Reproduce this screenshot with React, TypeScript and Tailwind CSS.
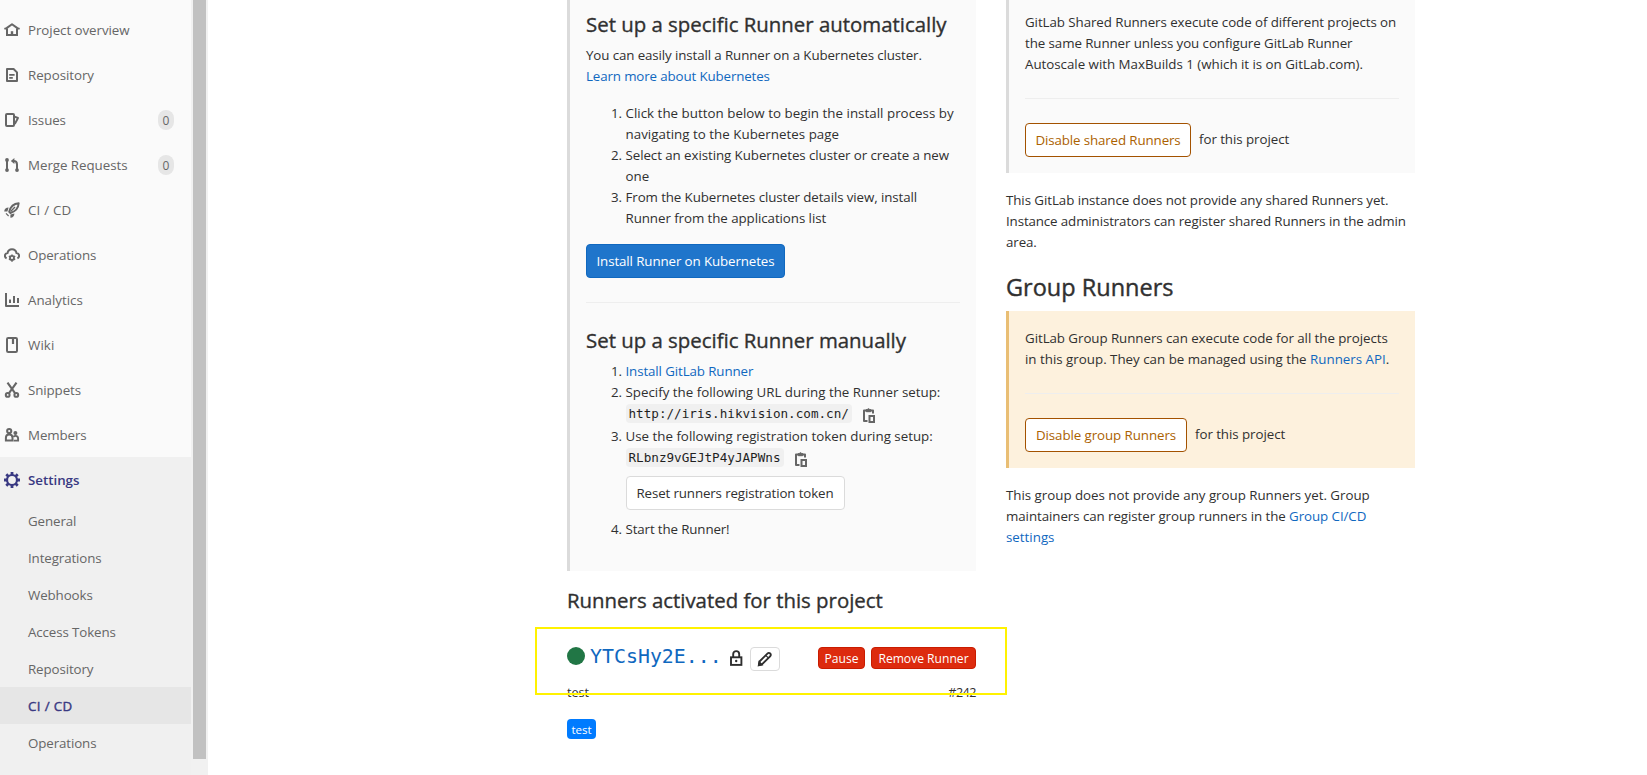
import type { ReactNode } from "react";

type IconProps = { children: ReactNode; className?: string };

function Icon({ children, className = "" }: IconProps) {
  return (
    <svg
      viewBox="0 0 16 16"
      fill="none"
      stroke="currentColor"
      strokeWidth="1.9"
      className={`h-4 w-4 shrink-0 ${className}`}
    >
      {children}
    </svg>
  );
}

const icons = {
  home: (
    <Icon>
      <path d="M.4 6.9 2.6 6.1 8 2.2l5.4 3.9 2.2.8" strokeLinejoin="round" strokeWidth="2" />
      <path d="M3 6.5v6.6h10V6.5" strokeWidth="2" />
      <path d="M8 9.2v4" strokeWidth="2.4" />
    </Icon>
  ),
  doc: (
    <Icon>
      <path d="M3 2h6.6L13 5.4V14H3z" strokeLinejoin="round" strokeWidth="2" />
      <path d="M5.2 7.8h5.4M5.2 10.8h3.6" strokeWidth="1.7" />
    </Icon>
  ),
  issues: (
    <Icon>
      <rect x="2" y="2" width="8" height="12" rx="1" strokeWidth="2" />
      <path d="M10.5 4.6 14 6l-3.2 6" strokeLinejoin="round" />
    </Icon>
  ),
  merge: (
    <Icon>
      <path d="M3 3v10" strokeWidth="2" />
      <path d="M13 13V7.4C13 5.2 11.8 4 9.5 4H8.4" strokeWidth="2" />
      <path d="M10.4 .9v6.2L6.8 4z" fill="currentColor" stroke="none" />
      <g fill="currentColor" stroke="none">
        <circle cx="3" cy="2.9" r="1.9" />
        <circle cx="3" cy="13.1" r="1.9" />
        <circle cx="13" cy="13.1" r="1.9" />
      </g>
    </Icon>
  ),
  rocket: (
    <Icon>
      <path d="M5.2 9.8C6.4 5 9.6 1.6 14.7 1.3 14.4 6.4 11 9.6 6.4 11z" strokeLinejoin="round" />
      <path d="M6.6 9.4 11 5" strokeWidth="1.4" />
      <path
        d="M.2 9.4C.4 7 2 5.4 4.6 5.4L3.4 9.4zM6.4 15.8c2.6-.2 4-1.8 4-4.4l-4 1.2z"
        fill="currentColor"
        stroke="none"
      />
      <path d="m2 11.400 2.600 2.600" strokeWidth="1.2" />
    </Icon>
  ),
  cloudGear: (
    <Icon>
      <path
        d="M2.6 11.4C1.5 10.9.9 10 .9 8.8.9 7.2 2 6.2 3.5 6 4 3.6 5.700 2.200 8 2.200s4 1.400 4.500 3.800c1.500.2 2.600 1.200 2.600 2.800 0 1.200-.6 2.100-1.700 2.600"
        strokeWidth="2"
      />
      <circle cx="8" cy="10.9" r="2" />
      <path
        d="M8 7.400v1.400M8 13v1.800M4.900 9.100l1.300.8M9.800 11.900l1.400.8M4.900 12.700l1.300-.8M9.800 9.900l1.400-.8"
        strokeWidth="1.5"
      />
    </Icon>
  ),
  chart: (
    <Icon>
      <path d="M2 1v13h13" strokeWidth="2" strokeLinejoin="round" />
      <path d="M6 7.5V11M10 4v7M14 6v5" strokeWidth="2" />
    </Icon>
  ),
  book: (
    <Icon>
      <rect x="3" y="1" width="10" height="14" rx="1.2" strokeWidth="2" />
      <path d="M9 1v6" strokeWidth="2.2" />
    </Icon>
  ),
  scissors: (
    <Icon>
      <circle cx="3.7" cy="12.9" r="1.9" strokeWidth="2" />
      <circle cx="12.3" cy="12.9" r="1.9" strokeWidth="2" />
      <path d="M3.5 .7 11 11.2M12.5 .7 5 11.2" strokeWidth="2.1" />
    </Icon>
  ),
  people: (
    <Icon>
      <circle cx="5.2" cy="4" r="2.1" strokeWidth="2" />
      <path d="M1.900 13.600v-2.800C1.900 8.600 3.300 7.500 5.200 7.500s3.300 1.100 3.300 3.300v2.800z" strokeWidth="2" />
      <circle cx="11.4" cy="6" r="2" fill="currentColor" stroke="none" />
      <path d="M9.700 13.600h4.400v-2c0-1.700-1-2.700-2.600-2.700-1 0-1.600.3-2.200.9" />
    </Icon>
  ),
  gear: (
    <Icon>
      <circle cx="8" cy="8" r="5" strokeWidth="2.2" />
      <path
        d="M8 0v3M8 13v3M0 8h3M13 8h3M2.300 2.300l2.100 2.100M11.600 11.600l2.100 2.100M2.300 13.700l2.100-2.100M11.600 4.400l2.100-2.100"
        strokeWidth="2.8"
      />
    </Icon>
  ),
  copy: (
    <Icon className="text-[#666]">
      <path d="M6.5 14H3V3.500h9V6.500" strokeWidth="2" strokeLinejoin="round" />
      <path d="M5.300 4.700V2.500h1a1.300 1.300 0 0 1 2.400 0h1v2.200z" fill="currentColor" strokeWidth="1" />
      <rect x="8.500" y="9" width="4.500" height="6" strokeWidth="2" />
    </Icon>
  ),
  lock: (
    <Icon className="text-[#2e2e2e]">
      <rect x="3" y="7.300" width="10.400" height="7.600" strokeWidth="1.900" />
      <path d="M5.200 7V4.100a3 3 0 0 1 6 0V7" />
      <circle cx="8.200" cy="11" r="1.200" fill="currentColor" stroke="none" />
    </Icon>
  ),
  pencil: (
    <Icon className="text-[#2e2e2e]">
      <path
        d="m2.500 10.500 7.900-7.900c.9-.9 2-.9 2.800-.1.800.8.8 1.900-.1 2.800l-7.900 7.900-3.300.6z"
        strokeLinejoin="round"
      />
      <path d="m8.700 4.300 2.900 2.900M1.400 14.600l.8-3.800 3 3z" fill="currentColor" strokeWidth="1.2" />
    </Icon>
  ),
};

const navItems = [
  { label: "Project overview", icon: icons.home, fit: "tracking-[-0.05px]" },
  { label: "Repository", icon: icons.doc, fit: "tracking-[-0.05px]" },
  { label: "Issues", icon: icons.issues, fit: "tracking-[-0.1px]", count: 0 },
  { label: "Merge Requests", icon: icons.merge, fit: "tracking-[-0.04px]", count: 0 },
  { label: "CI / CD", icon: icons.rocket, fit: "tracking-[0.2px]" },
  { label: "Operations", icon: icons.cloudGear, fit: "tracking-[-0.13px]" },
  { label: "Analytics", icon: icons.chart, fit: "tracking-[-0.01px]" },
  { label: "Wiki", icon: icons.book, fit: "tracking-[0.1px]" },
  { label: "Snippets", icon: icons.scissors, fit: "tracking-[-0.1px]" },
  { label: "Members", icon: icons.people, fit: "tracking-[-0.1px]" },
];

const settingsItems = ["General", "Integrations", "Webhooks", "Access Tokens", "Repository", "CI / CD", "Operations"];

function Sidebar() {
  return (
    <aside className="flex h-full w-[208px] shrink-0 bg-[#f1f1f1]">
      <nav className="flex w-[191px] flex-col bg-[#fafafa] pt-[7px] text-[#666]">
        {navItems.map((item) => (
          <a key={item.label} className="flex h-[45px] shrink-0 items-center pl-1 pr-[17px] pt-px">
            {item.icon}
            <span className={`ml-2 whitespace-nowrap ${item.fit}`}>{item.label}</span>
            {item.count !== undefined && (
              <span className="ml-auto flex h-5 w-4 items-center justify-center rounded-full bg-[#e6e6e6] pt-px text-[12px]">
                {item.count}
              </span>
            )}
          </a>
        ))}
        <div className="flex grow flex-col bg-[#f0f0f0]">
          <a className="flex h-[45px] items-center pl-1 pt-px font-semibold text-[#393982]">
            {icons.gear}
            <span className="ml-2 tracking-[-0.02px]">Settings</span>
          </a>
          {settingsItems.map((label) => (
            <a
              key={label}
              className={
                label === "CI / CD"
                  ? "flex h-[37px] items-center bg-[#e6e6e6] pl-7 pt-px tracking-[0.35px] text-[#393982] [-webkit-text-stroke:0.4px]"
                  : "flex h-[37px] items-center pl-7 pt-px tracking-[-0.11px]"
              }
            >
              {label}
            </a>
          ))}
        </div>
      </nav>
      <div className="h-[759px] w-[15px] border-l-2 border-[#f1f1f1] bg-[#c1c1c1]" />
    </aside>
  );
}

function Line({ children, className = "" }: { children: ReactNode; className?: string }) {
  return <span className={`block whitespace-nowrap ${className}`}>{children}</span>;
}

function Heading({ children }: { children: ReactNode }) {
  return (
    <h4 className="whitespace-nowrap text-[20.4px] font-medium leading-[27px] [-webkit-text-stroke:0.35px]">
      {children}
    </h4>
  );
}

function Link({ children }: { children: ReactNode }) {
  return <a className="text-[#1068bf]">{children}</a>;
}

function CopyableCode({ children }: { children: ReactNode }) {
  return (
    <div className="-mt-px flex h-6 items-center pb-px">
      <code className="rounded-[4px] bg-[#f0f0f0] px-[3px] font-['DejaVu_Sans_Mono',monospace] text-[12.64px] leading-[19px] text-[#1f1f1f]">
        {children}
      </code>
      <span className="ml-[9px] mt-0.5">{icons.copy}</span>
    </div>
  );
}

function SpecificRunners() {
  return (
    <section className="w-[409px] shrink-0">
      <div className="h-[571px] border-l-[3px] border-[#dbdbdb] bg-[#fafafa] px-4 pt-[11px]">
        <Heading>Set up a specific Runner automatically</Heading>
        <p className="mt-[7px]">
          <Line className="tracking-[-0.11px]">You can easily install a Runner on a Kubernetes cluster.</Line>
          <Line className="tracking-[-0.13px]">
            <Link>Learn more about Kubernetes</Link>
          </Line>
        </p>
        <ol className="mt-4 list-decimal pl-[39.5px]">
          <li>
            <Line className="tracking-[0.025px]">Click the button below to begin the install process by</Line>
            <Line className="tracking-[0.025px]">navigating to the Kubernetes page</Line>
          </li>
          <li>
            <Line className="tracking-[-0.07px]">Select an existing Kubernetes cluster or create a new</Line>
            <Line>one</Line>
          </li>
          <li>
            <Line className="tracking-[-0.1px]">From the Kubernetes cluster details view, install</Line>
            <Line className="tracking-[-0.07px]">Runner from the applications list</Line>
          </li>
        </ol>
        <button className="mt-[15px] flex h-[34px] w-[199px] items-center justify-center whitespace-nowrap rounded-[4px] border border-[#1068bf] bg-[#1f75cb] tracking-[-0.11px] text-white">
          Install Runner on Kubernetes
        </button>
        <hr className="my-6 border-[#eee]" />
        <Heading>Set up a specific Runner manually</Heading>
        <ol className="mt-[7px] list-decimal pl-[39.5px]">
          <li>
            <Line className="tracking-[-0.11px]">
              <Link>Install GitLab Runner</Link>
            </Line>
          </li>
          <li>
            <Line>Specify the following URL during the Runner setup:</Line>
            <CopyableCode>http://iris.hikvision.com.cn/</CopyableCode>
          </li>
          <li>
            <Line>Use the following registration token during setup:</Line>
            <CopyableCode>RLbnz9vGEJtP4yJAPWns</CopyableCode>
            <button className="mb-[9px] mt-1.5 flex h-[34px] w-[219px] items-center justify-center whitespace-nowrap rounded-[4px] border border-[#dbdbdb] bg-white tracking-[-0.13px]">
              Reset runners registration token
            </button>
          </li>
          <li>
            <Line className="tracking-[-0.13px]">Start the Runner!</Line>
          </li>
        </ol>
      </div>

      <div className="mt-4">
        <Heading>Runners activated for this project</Heading>
      </div>

      <div className="relative pt-[31px]">
        <div className="flex h-6 items-start">
          <span className="-ml-[0.5px] mt-[1.5px] h-[18px] w-[18px] rounded-full bg-[#217645]" />
          <a className="ml-[5.5px] font-['DejaVu_Sans_Mono',monospace] text-[19.9px] leading-6 text-[#1068bf]">
            YTCsHy2E...
          </a>
          <span className="ml-[6px] mt-[5px]">{icons.lock}</span>
          <button className="ml-1.5 mt-0.5 flex h-6 w-[30px] items-center justify-center rounded-[4px] border border-[#dbdbdb] bg-white">
            {icons.pencil}
          </button>
          <div className="ml-auto mt-0.5 flex gap-1.5 text-[12.1px] text-white">
            <button className="flex h-[22px] w-[47px] items-center justify-center rounded-[4px] border border-[#c91c00] bg-[#dd2b0e]">
              Pause
            </button>
            <button className="flex h-[22px] w-[105px] items-center justify-center whitespace-nowrap rounded-[4px] border border-[#c91c00] bg-[#dd2b0e]">
              Remove Runner
            </button>
          </div>
        </div>
        <div className="mt-[13px] flex justify-between text-[12.6px]">
          <span>test</span>
          <span className="tracking-[-0.5px]">#242</span>
        </div>
        <span className="mt-4 flex h-5 w-[29px] items-center justify-center rounded-[4px] bg-[#007bff] pt-px text-[11.5px] text-white">
          test
        </span>
        <div className="pointer-events-none absolute -left-8 top-[13px] h-[68px] w-[472px] border-2 border-[#fff200]" />
      </div>
    </section>
  );
}

function SharedAndGroupRunners() {
  return (
    <section className="w-[409px] shrink-0">
      <div className="h-[173px] border-l-[3px] border-[#dbdbdb] bg-[#fafafa] px-4 pt-3">
        <Line className="tracking-[-0.07px]">GitLab Shared Runners execute code of different projects on</Line>
        <Line className="tracking-[-0.08px]">the same Runner unless you configure GitLab Runner</Line>
        <Line className="tracking-[-0.02px]">Autoscale with MaxBuilds 1 (which it is on GitLab.com).</Line>
        <hr className="mb-6 mt-[23px] border-[#eee]" />
        <div className="flex items-center gap-2">
          <button className="flex h-[34px] w-[166px] items-center justify-center whitespace-nowrap rounded-[4px] border border-[#a35200] bg-white tracking-[-0.12px] text-[#ab6100]">
            Disable shared Runners
          </button>
          <span className="-mt-0.5 tracking-[-0.06px]">for this project</span>
        </div>
      </div>
      <p className="mt-[17px]">
        <Line className="tracking-[-0.07px]">This GitLab instance does not provide any shared Runners yet.</Line>
        <Line className="tracking-[-0.12px]">Instance administrators can register shared Runners in the admin</Line>
        <Line className="tracking-[-0.1px]">area.</Line>
      </p>
      <h3 className="mt-[19px] text-[23.5px] font-medium leading-[31px] [-webkit-text-stroke:0.4px]">
        Group Runners
      </h3>
      <div className="mt-2 h-[157px] border-l-[3px] border-[#e9be74] bg-[#fdf1dd] px-4 pt-[17px]">
        <Line className="tracking-[-0.06px]">GitLab Group Runners can execute code for all the projects</Line>
        <Line>
          in this group. They can be managed using the <Link>Runners API</Link>.
        </Line>
        <hr className="mb-6 mt-[23px] border-[#eee]" />
        <div className="flex items-center gap-2">
          <button className="flex h-[34px] w-[162px] items-center justify-center whitespace-nowrap rounded-[4px] border border-[#a35200] bg-white tracking-[-0.08px] text-[#ab6100]">
            Disable group Runners
          </button>
          <span className="-mt-0.5 tracking-[-0.06px]">for this project</span>
        </div>
      </div>
      <p className="mt-[17px]">
        <Line className="tracking-[-0.02px]">This group does not provide any group Runners yet. Group</Line>
        <Line className="tracking-[-0.07px]">
          maintainers can register group runners in the <Link>Group CI/CD</Link>
        </Line>
        <Line>
          <Link>settings</Link>
        </Line>
      </p>
    </section>
  );
}

export default function App() {
  return (
    <div className="flex h-[775px] w-[1647px] overflow-hidden bg-white font-['Open_Sans',sans-serif] text-[13.33px] leading-[21px] text-[#303030]">
      <Sidebar />
      <main className="flex grow gap-[30px] pl-[359px]">
        <SpecificRunners />
        <SharedAndGroupRunners />
      </main>
    </div>
  );
}
